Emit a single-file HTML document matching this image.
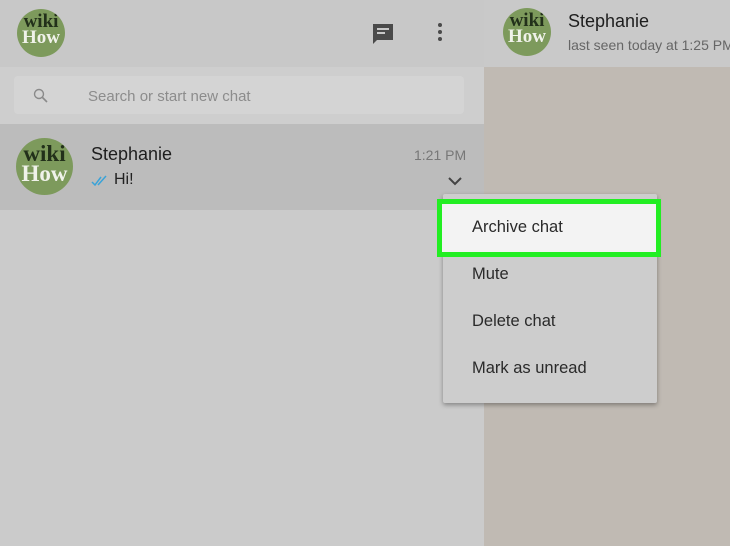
<!DOCTYPE html>
<html><head><style>
body{margin:0;width:730px;height:546px;overflow:hidden;font-family:"Liberation Sans",sans-serif;background:#cbcbcb;position:relative}
div{position:absolute;box-sizing:border-box}
.av{border-radius:50%;background:#7d9a5c;overflow:hidden;font-family:"Liberation Serif",serif;font-weight:bold;line-height:.85;text-align:center}
.av span{display:block}
.mi{left:472px;font-size:16.5px;color:#2a2a2a}
</style></head><body>
<div style="left:0;top:0;width:484px;height:67px;background:#c8c8c8"></div>
<div style="left:0;top:67px;width:484px;height:57px;background:#cecece"></div>
<div style="left:14px;top:76px;width:450px;height:38px;background:#d4d4d4;border-radius:4px"></div>
<svg style="position:absolute;left:33px;top:88px" width="16" height="16"><circle cx="6" cy="6" r="4.5" fill="none" stroke="#8a8a8a" stroke-width="1.4"/><path d="M9.5 9.5L14 14" stroke="#8a8a8a" stroke-width="1.6"/></svg>
<div style="left:88px;top:88px;font-size:15px;color:#8c8c8c">Search or start new chat</div>
<div style="left:0;top:124px;width:484px;height:86px;background:#bcbcbc"></div>
<div style="left:484px;top:0;width:246px;height:67px;background:#c9c9c9"></div>
<div style="left:484px;top:67px;width:246px;height:479px;background:#c0bab3"></div>
<div class="av" style="left:17px;top:9px;width:48px;height:48px;font-size:19px;padding-top:5px"><span style="color:#22301a">wiki</span><span style="color:#f0f2ea">How</span></div>
<div class="av" style="left:16px;top:138px;width:57px;height:57px;font-size:23px;padding-top:6px"><span style="color:#22301a">wiki</span><span style="color:#f0f2ea">How</span></div>
<div class="av" style="left:503px;top:8px;width:48px;height:48px;font-size:19px;padding-top:5px"><span style="color:#22301a">wiki</span><span style="color:#f0f2ea">How</span></div>
<svg style="position:absolute;left:371px;top:22px" width="24" height="24"><path d="M2 2h20v16H6l-4 4z" fill="#4a4a4a"/><path d="M6 7h12M6 11h8" stroke="#c8c8c8" stroke-width="2"/></svg>
<svg style="position:absolute;left:436px;top:22px" width="8" height="20"><circle cx="4" cy="3" r="2" fill="#4a4a4a"/><circle cx="4" cy="10" r="2" fill="#4a4a4a"/><circle cx="4" cy="17" r="2" fill="#4a4a4a"/></svg>
<div style="left:91px;top:144px;font-size:18px;color:#1e1e1e">Stephanie</div>
<div style="left:414px;top:147px;font-size:14px;color:#777">1:21 PM</div>
<svg style="position:absolute;left:91px;top:175px" width="20" height="12"><path d="M1 7l3 3L10 2M7 10L15 1" stroke="#3aa3d8" stroke-width="1.5" fill="none"/></svg>
<div style="left:114px;top:171px;font-size:16px;color:#222">Hi!</div>
<svg style="position:absolute;left:447px;top:176px" width="16" height="10"><path d="M2 2l6 6 6-6" stroke="#444" stroke-width="2" fill="none"/></svg>
<div style="left:568px;top:11px;font-size:18px;color:#1e1e1e">Stephanie</div>
<div style="left:568px;top:37px;font-size:14px;color:#666;white-space:nowrap">last seen today at 1:25 PM</div>
<div style="left:443px;top:194px;width:214px;height:209px;background:#cdcdcd;box-shadow:0 2px 5px rgba(0,0,0,.35);border-radius:2px"></div>
<div style="left:437px;top:199px;width:224px;height:58px;background:#f3f3f3;border:5px solid #22ee22"></div>
<div class="mi" style="top:218px">Archive chat</div>
<div class="mi" style="top:265px">Mute</div>
<div class="mi" style="top:312px">Delete chat</div>
<div class="mi" style="top:359px">Mark as unread</div>
</body></html>
